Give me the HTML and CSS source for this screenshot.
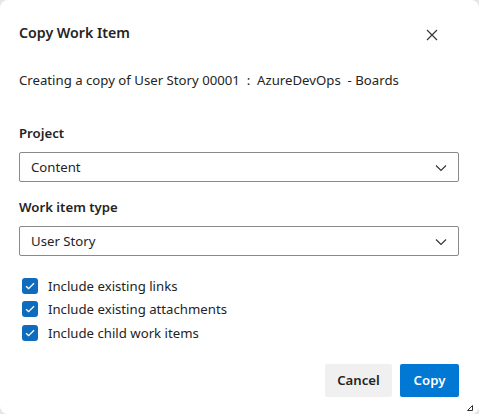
FILE: index.html
```html
<!DOCTYPE html>
<html lang="en">
<head>
<meta charset="utf-8">
<title>Copy Work Item</title>
<link rel="stylesheet" href="styles.css">
</head>
<body>
<div class="dialog" role="dialog" aria-labelledby="dlg-title">
  <header class="dialog-header">
    <h1 id="dlg-title" class="dialog-title">Copy Work Item</h1>
    <button class="close-btn" aria-label="Close">
      <svg width="12" height="12" viewBox="0 0 12 12"><path d="M1 1L11 11M11 1L1 11" stroke="#323130" stroke-width="1.1" fill="none"/></svg>
    </button>
  </header>

  <p class="subtitle">Creating a copy of User Story 00001  :  AzureDevOps  - Boards</p>

  <div class="field field-first">
    <label class="field-label">Project</label>
    <div class="dropdown">
      <span class="dropdown-value">Content</span>
      <svg class="chevron" width="12" height="8" viewBox="0 0 12 8"><path d="M1 1.5L6 6.5L11 1.5" stroke="#323130" stroke-width="1.1" fill="none"/></svg>
    </div>
  </div>

  <div class="field">
    <label class="field-label">Work item type</label>
    <div class="dropdown">
      <span class="dropdown-value">User Story</span>
      <svg class="chevron" width="12" height="8" viewBox="0 0 12 8"><path d="M1 1.5L6 6.5L11 1.5" stroke="#323130" stroke-width="1.1" fill="none"/></svg>
    </div>
  </div>

  <ul class="options">
    <li class="option"><span class="checkbox"><svg width="10" height="8" viewBox="0 0 10 8"><path d="M1 4.2L3.6 6.6L9 1.2" stroke="#fff" stroke-width="1.3" fill="none"/></svg></span>Include existing links</li>
    <li class="option"><span class="checkbox"><svg width="10" height="8" viewBox="0 0 10 8"><path d="M1 4.2L3.6 6.6L9 1.2" stroke="#fff" stroke-width="1.3" fill="none"/></svg></span>Include existing attachments</li>
    <li class="option"><span class="checkbox"><svg width="10" height="8" viewBox="0 0 10 8"><path d="M1 4.2L3.6 6.6L9 1.2" stroke="#fff" stroke-width="1.3" fill="none"/></svg></span>Include child work items</li>
  </ul>

  <footer class="dialog-footer">
    <button class="btn btn-secondary">Cancel</button>
    <button class="btn btn-primary">Copy</button>
  </footer>

  <svg class="grip" width="6" height="6" viewBox="0 0 6 6"><path d="M5.5 0.5L0.5 5.5H5.5Z" stroke="#323130" stroke-width="1" fill="none"/></svg>
</div>
</body>
</html>
```

FILE: styles.css
```css
html, body {
  margin: 0;
  padding: 0;
  height: 100%;
}

body {
  background: #e6e6e6;
  font-family: "Noto Sans", "Segoe UI", sans-serif;
  color: #242424;
  font-size: 13.2px;
}

.dialog {
  position: relative;
  box-sizing: border-box;
  width: 479px;
  height: 414px;
  background: #fff;
  border-radius: 8px;
  padding: 23px 20px 0 19px;
  display: flex;
  flex-direction: column;
}

.dialog-header {
  display: flex;
  align-items: center;
  justify-content: space-between;
  height: 20px;
}

.dialog-title {
  margin: 0;
  font-size: 14.2px;
  font-weight: 600;
  line-height: 20px;
}

.close-btn {
  border: 0;
  background: none;
  padding: 0;
  margin-right: 21px;
  margin-top: 4px;
  width: 12px;
  height: 12px;
  display: flex;
  cursor: pointer;
}

.subtitle {
  margin: 27px 0 0;
  line-height: 20px;
  white-space: pre;
}

.field {
  display: flex;
  flex-direction: column;
  margin-top: 15px;
}

.field-first {
  margin-top: 33px;
}

.field-label {
  font-weight: 600;
  line-height: 20px;
  margin-bottom: 9px;
}

.dropdown {
  box-sizing: border-box;
  height: 30px;
  border: 1px solid #8a8a8a;
  border-radius: 2px;
  display: flex;
  align-items: center;
  justify-content: space-between;
  padding: 0 11px 0 11px;
}

.chevron {
  margin-top: 1px;
}

.options {
  list-style: none;
  margin: 18px 0 0;
  padding: 0;
}

.option {
  display: flex;
  align-items: center;
  height: 23.5px;
  padding-left: 3px;
}

.checkbox {
  width: 16px;
  height: 16px;
  border-radius: 3px;
  background: #0f6cbd;
  display: inline-flex;
  align-items: center;
  justify-content: center;
  margin-right: 10px;
}

.dialog-footer {
  display: flex;
  justify-content: flex-end;
  gap: 8px;
  margin-top: 19px;
}

.btn {
  font-family: inherit;
  font-size: 13.2px;
  font-weight: 600;
  height: 33px;
  border: 0;
  border-radius: 2px;
  cursor: pointer;
}

.btn-secondary {
  background: #f0f0f0;
  color: #242424;
  width: 67px;
}

.btn-primary {
  background: #0078d4;
  color: #fff;
  width: 59px;
}

.grip {
  position: absolute;
  right: 6px;
  bottom: 3px;
}
```
